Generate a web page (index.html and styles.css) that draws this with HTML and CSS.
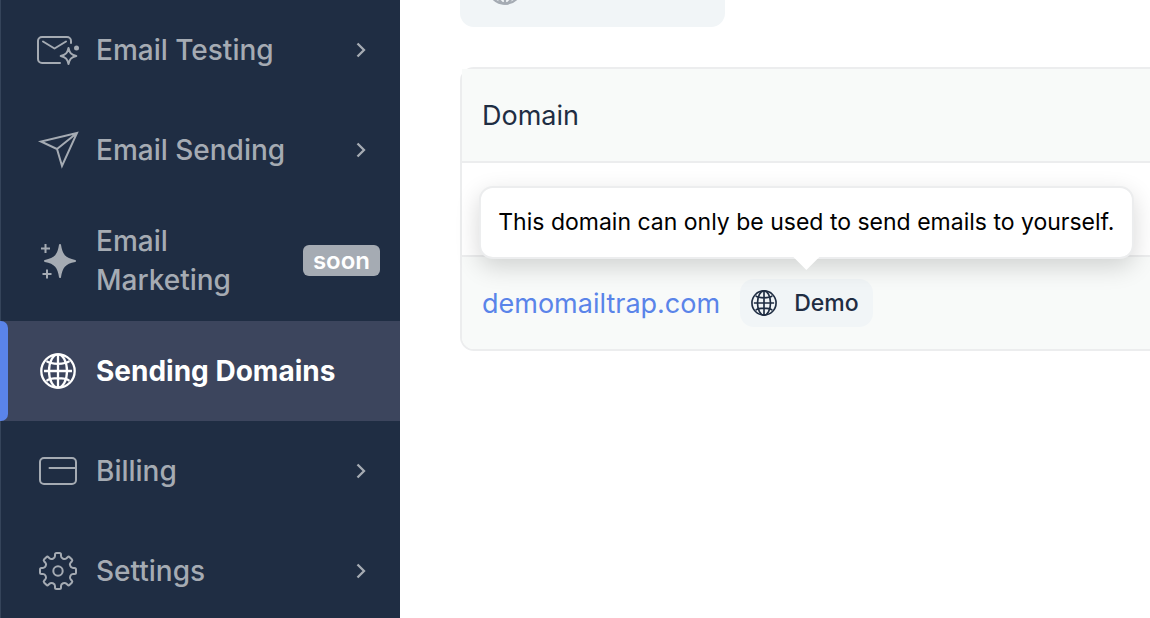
FILE: index.html
```html
<!DOCTYPE html>
<html lang="en">
<head>
<meta charset="utf-8">
<title>Sending Domains</title>
<link rel="stylesheet" href="styles.css">
</head>
<body>
<svg class="symbols" aria-hidden="true">
  <symbol id="globe" viewBox="0 0 36 36">
    <g fill="none" stroke="currentColor" stroke-width="2.300">
      <circle cx="18" cy="18" r="16.700"/>
      <ellipse cx="18" cy="18" rx="9" ry="16.700"/>
      <path d="M18 1.300v33.400M4 18h28M6.500 8.200c2.300 1.700 6.500 2.600 11.500 2.600s9.200-.9 11.500-2.600M6.500 27.800c2.300-1.700 6.500-2.600 11.500-2.600s9.200.9 11.500 2.600"/>
    </g>
  </symbol>
  <symbol id="chevron" viewBox="0 0 10 16">
    <path d="M1.500 1.500 8 8l-6.500 6.500" fill="none" stroke="currentColor" stroke-width="2.300"/>
  </symbol>
</svg>
<div class="app">
  <nav class="sidebar">
    <a class="item" href="#testing">
      <svg class="icon" viewBox="0 0 44 40" aria-hidden="true">
        <g fill="none" stroke="currentColor" stroke-width="2" stroke-linecap="round" stroke-linejoin="round">
          <path d="M24 33H6a4 4 0 0 1-4-4V11a4 4 0 0 1 4-4h25a4 4 0 0 1 4 4v2"/>
          <path d="m7 11.500 11.500 7 11.500-7"/>
          <path d="M32.500 18c1 4.800 2.700 6.800 7.800 8-5.100 1.200-6.800 3.200-7.800 8-1-4.800-2.700-6.800-7.800-8 5.100-1.200 6.800-3.200 7.800-8Z"/>
        </g>
        <circle cx="40.500" cy="18" r="2.500" fill="currentColor"/>
      </svg>
      <span class="label">Email Testing</span>
      <svg class="chevron" aria-hidden="true"><use href="#chevron"/></svg>
    </a>
    <a class="item" href="#sending">
      <svg class="icon" viewBox="0 0 44 40" aria-hidden="true">
        <path d="M41 3 5 11.500l16 7.500 5 17ZM21 19 41 3" fill="none" stroke="currentColor" stroke-width="2"/>
      </svg>
      <span class="label">Email Sending</span>
      <svg class="chevron" aria-hidden="true"><use href="#chevron"/></svg>
    </a>
    <a class="item" href="#marketing">
      <svg class="icon" viewBox="0 0 44 40" aria-hidden="true">
        <path d="M24 4c1.500 10 4.500 14 15 16-10.500 2-13.500 6-15 16-1.500-10-4.500-14-15-16 10.500-2 13.500-6 15-16Z" fill="currentColor" stroke="currentColor" stroke-width="2" stroke-linejoin="round"/>
        <path d="M9.500 3v9M5 7.500h9M11 28.500v9M6.500 33h9" fill="none" stroke="currentColor" stroke-width="2"/>
      </svg>
      <span class="label">Email Marketing</span>
      <span class="soon">soon</span>
    </a>
    <a class="item active" href="#domains" aria-current="page">
      <svg class="icon" aria-hidden="true"><use href="#globe" x="4" y="2" width="36" height="36"/></svg>
      <span class="label">Sending Domains</span>
    </a>
    <a class="item" href="#billing">
      <svg class="icon" viewBox="0 0 44 40" aria-hidden="true">
        <g fill="none" stroke="currentColor" stroke-width="2" stroke-linecap="round">
          <rect x="4" y="7" width="36" height="26" rx="4"/>
          <path d="M13.500 17H39"/>
        </g>
      </svg>
      <span class="label">Billing</span>
      <svg class="chevron" aria-hidden="true"><use href="#chevron"/></svg>
    </a>
    <a class="item" href="#settings">
      <svg class="icon" viewBox="0 0 44 40" aria-hidden="true">
        <g transform="translate(22 20)" fill="none" stroke="currentColor" stroke-width="2" stroke-linejoin="round">
          <path id="gear-quarter" d="M-3-15V-16.500Q-3-18-1.500-18H1.500Q3-18 3-16.500V-15C3-12.500 6.720-10.960 8.490-12.730L9.550-13.790Q10.610-14.850 11.670-13.790L13.790-11.670Q14.850-10.610 13.790-9.550L12.730-8.490C10.960-6.720 12.500-3 15-3"/>
          <use href="#gear-quarter" transform="rotate(90)"/>
          <use href="#gear-quarter" transform="rotate(180)"/>
          <use href="#gear-quarter" transform="rotate(270)"/>
          <circle r="4.700"/>
        </g>
      </svg>
      <span class="label">Settings</span>
      <svg class="chevron" aria-hidden="true"><use href="#chevron"/></svg>
    </a>
  </nav>
  <main class="main">
    <button class="add" type="button" aria-label="Add domain">
      <svg class="add-icon" aria-hidden="true"><use href="#globe"/></svg>
    </button>
    <div class="panel">
      <table class="domains">
        <thead>
          <tr><th scope="col">Domain</th></tr>
        </thead>
        <tbody>
          <tr><td></td></tr>
          <tr>
            <td>
              <div class="domain">
                <a class="domain-link" href="#demomailtrap">demomailtrap.com</a>
                <span class="badge" aria-describedby="demo-tip">
                  <svg class="badge-icon" aria-hidden="true"><use href="#globe"/></svg>
                  Demo
                  <span class="tooltip" id="demo-tip" role="tooltip">This domain can only be used to send emails to yourself.</span>
                </span>
              </div>
            </td>
          </tr>
        </tbody>
      </table>
    </div>
  </main>
</div>
</body>
</html>
```
FILE: styles.css
```css
* {
  box-sizing: border-box;
}

body {
  margin: 0;
  background: #fff;
  color: #1f2d43;
  font-family: Inter, "Liberation Sans", sans-serif;
  font-size: 28px;
}

.symbols {
  position: absolute;
  width: 0;
  height: 0;
}

.app {
  display: flex;
  height: 100vh;
  overflow: hidden;
}

.sidebar {
  flex: 0 0 400px;
  background: #1f2d43;
  box-shadow: inset 1px 0 #35445a;
}

.item {
  position: relative;
  display: flex;
  align-items: center;
  gap: 16px;
  min-height: 100px;
  padding: 22px 20px 21px 36px;
  color: #a5abb3;
  font-weight: 500;
  line-height: 39px;
  text-decoration: none;
}

.icon {
  flex: none;
  width: 44px;
  height: 40px;
  margin-bottom: 1px;
}

.label {
  flex: 1;
}

.chevron {
  flex: none;
  width: 10px;
  height: 16px;
  margin: 0 14px 1px 0;
}

.soon {
  margin-bottom: 2px;
  padding: 0 10px;
  border-radius: 6px;
  background: #a5abb3;
  color: #fff;
  font-size: 24px;
  font-weight: 600;
  line-height: 31px;
}

.active {
  background: #3c455d;
  color: #fff;
  font-weight: 700;
}

.active::before {
  content: "";
  position: absolute;
  inset: 0 auto 0 0;
  width: 8px;
  border-radius: 0 7px 7px 0;
  background: #5a84e9;
}

.main {
  flex: 1;
  min-width: 0;
  padding-left: 60px;
}

.add {
  display: flex;
  align-items: center;
  width: 265px;
  height: 80px;
  margin: -53px 0 40px;
  padding: 0 27px;
  border: 0;
  border-radius: 14px;
  background: #f1f5f7;
  color: #a5abb3;
}

.add-icon {
  width: 36px;
  height: 36px;
}

.panel {
  border: 2px solid #ecedee;
  border-right: 0;
  border-radius: 14px 0 0 14px;
}

.domains {
  width: 100%;
  border-spacing: 0;
  font-size: 27px;
}

.domains th,
.domains td {
  height: 94px;
  padding: 0 20px;
  border-bottom: 2px solid #ecedee;
  font-weight: 400;
  text-align: left;
}

.domains th {
  background: #f8faf9;
}

.domains tbody tr:last-child td {
  height: 92px;
  border-bottom: 0;
  border-radius: 0 0 0 12px;
  background: #f8faf9;
}

.domain {
  display: flex;
  align-items: center;
  gap: 20px;
}

.domain-link {
  color: #5a84e9;
  text-decoration: none;
}

.badge {
  position: relative;
  display: flex;
  align-items: center;
  gap: 17px;
  height: 48px;
  padding: 0 14px 0 11px;
  border-radius: 14px;
  background: #f1f5f7;
  font-size: 23px;
  font-weight: 500;
}

.badge-icon {
  width: 26px;
  height: 26px;
}

.tooltip {
  position: absolute;
  bottom: calc(100% + 20px);
  left: 50%;
  transform: translateX(-50%);
  padding: 0 17px;
  border: 2px solid #ecedee;
  border-radius: 14px;
  background: #fff;
  box-shadow: 0 8px 24px rgba(0, 0, 0, 0.16);
  color: #000;
  font-weight: 400;
  line-height: 69px;
  white-space: nowrap;
}

.tooltip::after {
  content: "";
  position: absolute;
  top: 100%;
  left: 50%;
  width: 28px;
  height: 14px;
  margin: -1px 0 0 -14px;
  background: #fff;
  clip-path: polygon(0 0, 100% 0, 50% 100%);
}
```
